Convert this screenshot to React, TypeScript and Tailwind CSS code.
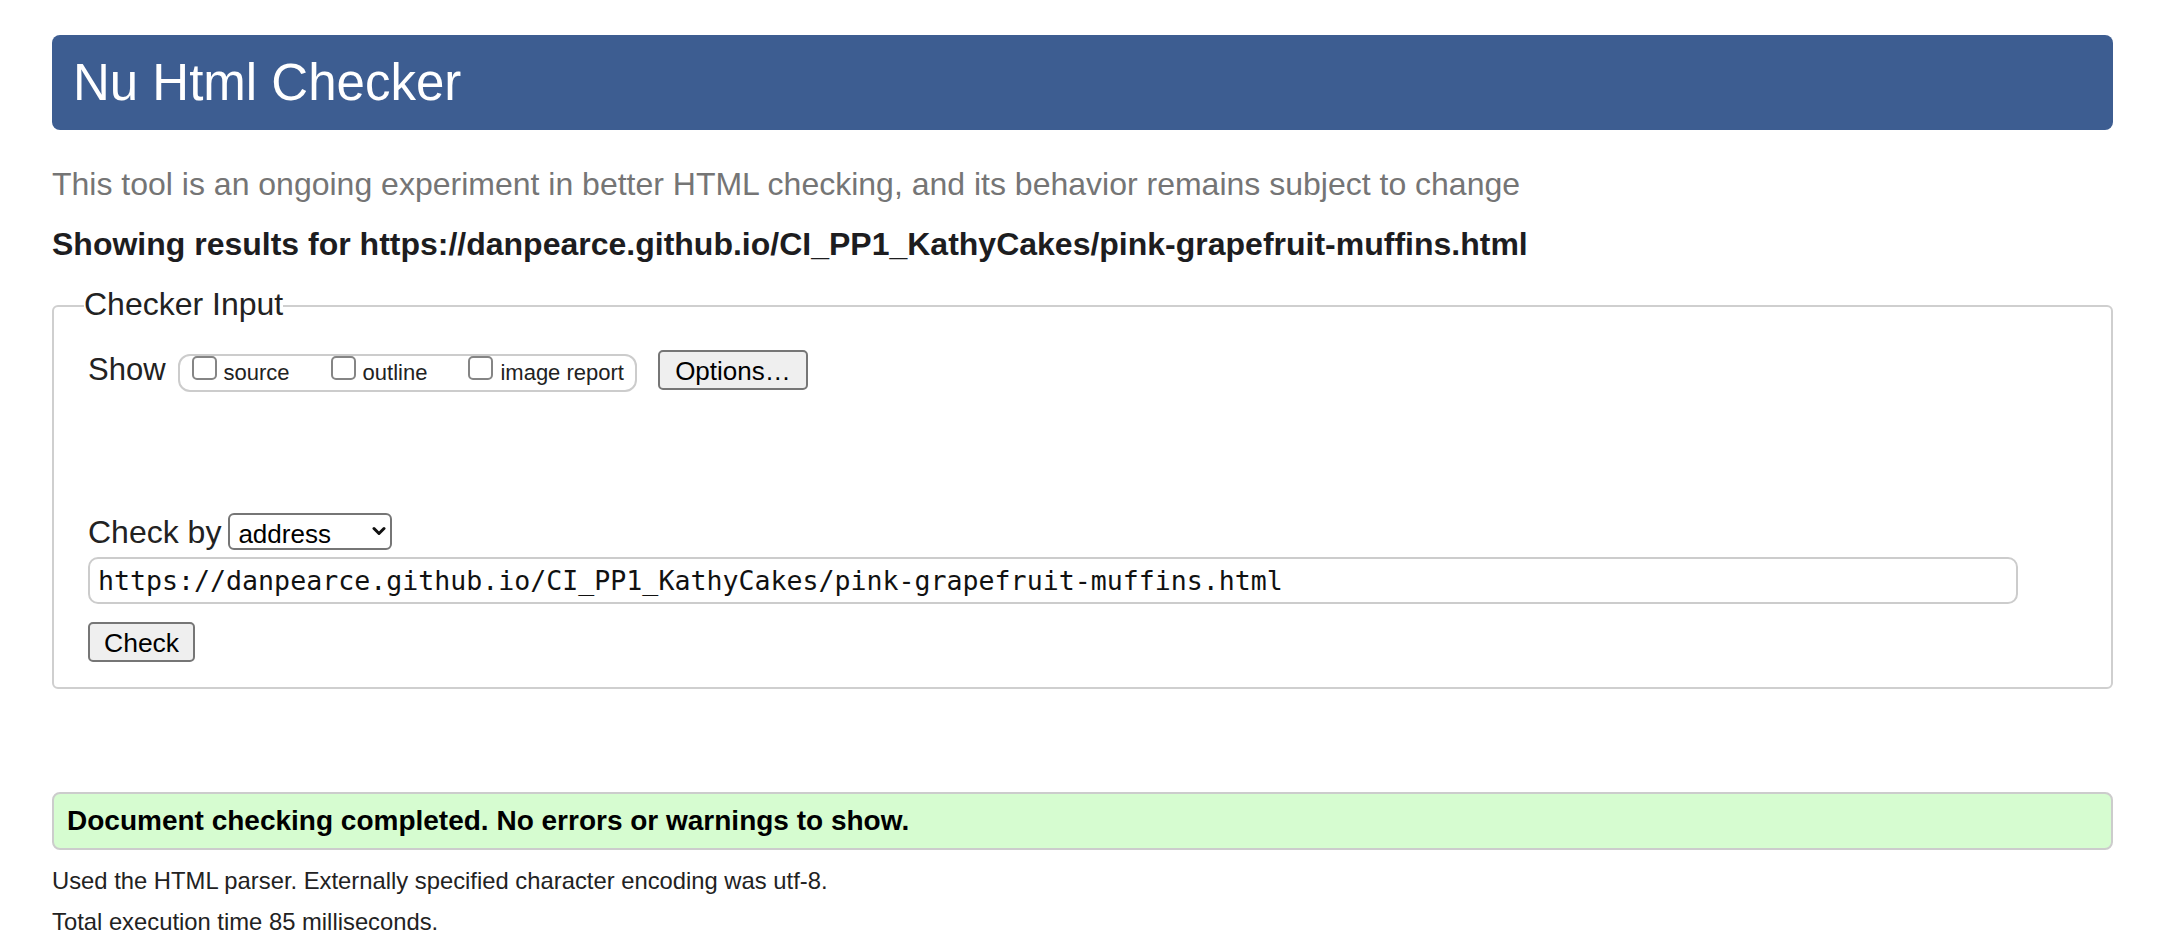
import React from "react";

function Chevron() {
  return (
    <svg
      className="pointer-events-none absolute right-[6px] top-[13px]"
      width="14"
      height="10"
      viewBox="0 0 14 10"
      fill="none"
    >
      <path d="M2 2.5 L7 7.5 L12 2.5" stroke="#111" strokeWidth="3" strokeLinecap="round" strokeLinejoin="round" />
    </svg>
  );
}

export default function App() {
  const url = "https://danpearce.github.io/CI_PP1_KathyCakes/pink-grapefruit-muffins.html";
  return (
    <div className="min-h-screen bg-white pt-[35px] pl-[52px] pr-[53px] font-['Liberation_Sans',Arial,sans-serif] text-[#222]">
      <header className="h-[95px] rounded-[8px] bg-[#3d5d91] pl-[21px]">
        <h1 className="text-[51px] leading-[95px] font-normal text-white">Nu Html Checker</h1>
      </header>

      <p className="mt-[34px] text-[32px] leading-[40px] text-[#757575]">
        This tool is an ongoing experiment in better HTML checking, and its behavior remains subject to change
      </p>
      <p className="mt-[20px] text-[32px] leading-[40px] font-bold text-[#1d1d1f]">Showing results for {url}</p>

      <fieldset className="mt-[24px] border-2 border-[#cfcfcf] rounded-[6px]">
        <legend className="ml-[30px] pb-[4px] text-[32px] leading-[32px] text-[#222]">Checker Input</legend>
        <div className="pl-[34px] pt-[26px] pb-[25px]">
          <div className="flex items-baseline">
            <span className="text-[31px] leading-[40px]">Show</span>
            <div className="ml-[12px] flex h-[38px] items-baseline gap-[41px] rounded-[12px] border-2 border-[#cccccc] pl-[12px] pr-[11px]">
              {["source", "outline", "image report"].map((l) => (
                <label key={l} className="flex items-baseline gap-[7px]">
                  <input
                    type="checkbox"
                    className="h-[24px] w-[25px] appearance-none rounded-[5px] border-2 border-[#858585] bg-white"
                  />
                  <span className="text-[22px] leading-[34px] text-[#222]">{l}</span>
                </label>
              ))}
            </div>
            <button className="ml-[21px] h-[40px] w-[150px] rounded-[5px] border-2 border-[#767676] bg-[#efefef] text-[26px] text-black">
              Options…
            </button>
          </div>

          <div className="mt-[120px] flex items-baseline gap-[7px]">
            <span className="text-[32px] leading-[40px]">Check by</span>
            <div className="relative flex">
              <select
                defaultValue="address"
                className="h-[37px] w-[164px] appearance-none rounded-[6px] border-2 border-[#767676] bg-white pl-[8px] text-[26px] text-black"
              >
                <option value="address">address</option>
                <option value="file">file upload</option>
                <option value="text">text input</option>
              </select>
              <Chevron />
            </div>
          </div>

          <input
            readOnly
            value={url}
            className="mt-[5px] block h-[47px] w-[1930px] rounded-[10px] border-2 border-[#cccccc] pl-[8px] pr-[5px] font-['DejaVu_Sans_Mono'] text-[26.6px] text-[#111]"
          />

          <button className="mt-[18px] block h-[40px] rounded-[5px] border-2 border-[#767676] bg-[#efefef] px-[14px] text-[26.5px] text-black">
            Check
          </button>
        </div>
      </fieldset>

      <div className="mt-[103px] flex h-[58px] items-center rounded-[8px] border-2 border-[#cccccc] bg-[#d6fcd0] pl-[13px]">
        <p className="text-[28px] font-bold text-black">Document checking completed. No errors or warnings to show.</p>
      </div>
      <p className="mt-[10px] text-[23.8px] leading-[41px] text-[#222]">
        Used the HTML parser. Externally specified character encoding was utf-8.
      </p>
      <p className="text-[23.8px] leading-[41px] text-[#222]">Total execution time 85 milliseconds.</p>
    </div>
  );
}
